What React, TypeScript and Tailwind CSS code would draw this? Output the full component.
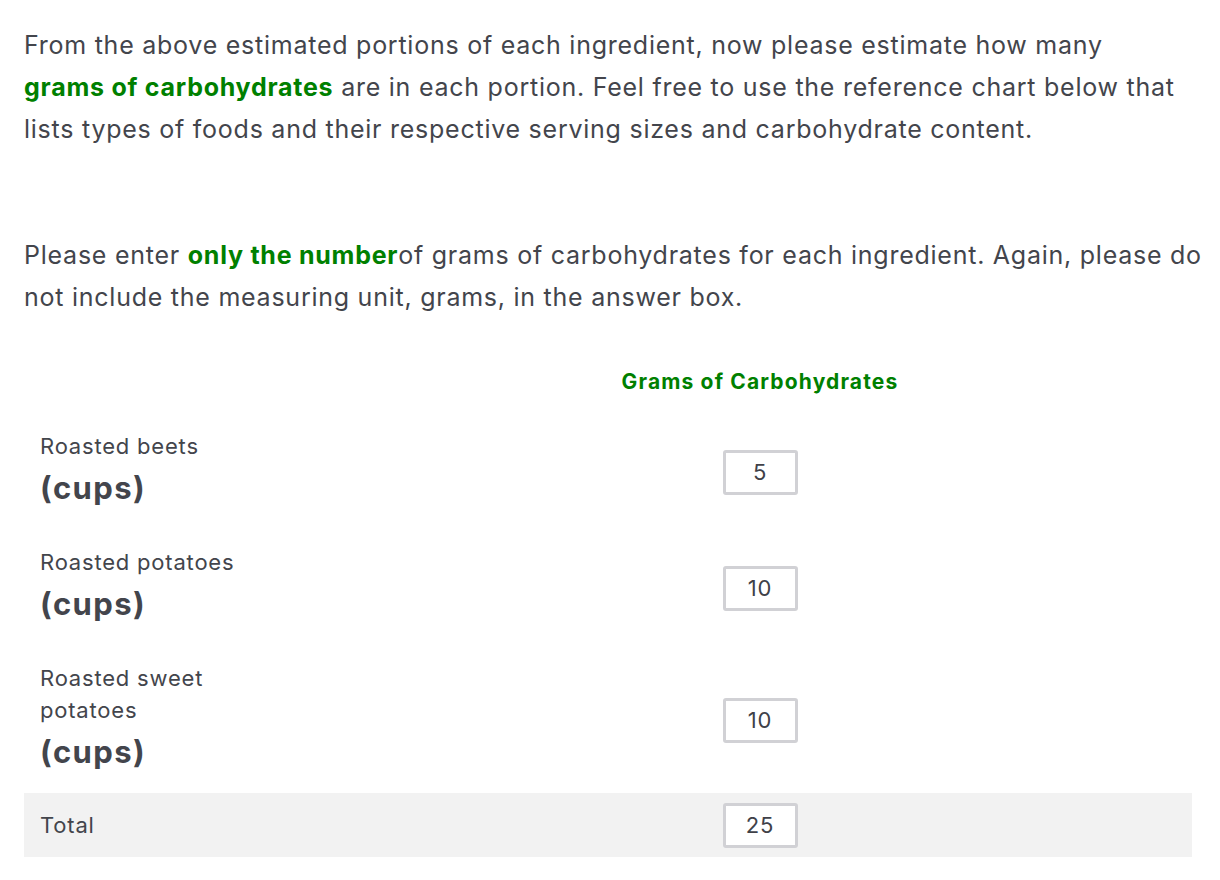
import { useState } from 'react';

const rows = [
  { name: 'Roasted beets', value: '5' },
  { name: 'Roasted potatoes', value: '10' },
  { name: 'Roasted sweet potatoes', value: '10' },
];

const NumBox = ({ value }: { value: string }) => (
  <div className="w-[75px] h-[45px] border-[3px] border-[#d1d1d5] rounded-[3px] bg-white flex items-center justify-center text-[22px] text-[#404148]">
    {value}
  </div>
);

export default function App() {
  const [items] = useState(rows);

  return (
    <div className="min-h-screen bg-white text-[#43454c] font-['Inter',sans-serif] tracking-[0.05em]">
      <div className="pl-[24px] pr-[16px] pt-[24px]">
        <p className="text-[25px] leading-[42px] tracking-[0.03em] pr-[24px]">
          From the above estimated portions of each ingredient, now please estimate how many{' '}
          <strong className="font-bold text-[#008000]">grams of carbohydrates</strong> are in each
          portion. Feel free to use the reference chart below that lists types of foods and their
          respective serving sizes and carbohydrate content.
        </p>

        <p className="text-[25px] leading-[42px] tracking-[0.03em] mt-[84px]">
          Please enter <strong className="font-bold text-[#008000]">only the number</strong>of grams
          of carbohydrates for each ingredient. Again, please do not include the measuring unit,
          grams, in the answer box.
        </p>

        <div className="mt-[50px] w-[1168px]">
          <div className="flex">
            <div className="w-[304px]" />
            <div className="flex-1 text-center text-[21px] font-bold text-[#008000] leading-[28px] tracking-[0.055em]">
              Grams of Carbohydrates
            </div>
          </div>

          <div className="mt-[18px]">
            {items.map((r) => (
              <div key={r.name} className="flex items-center py-[16px]">
                <div className="w-[304px] pl-[16px]">
                  <div className="max-w-[220px] text-[22px] leading-[32px]">{r.name}</div>
                  <div className="text-[31px] font-bold leading-[52px] tracking-[0.045em]">(cups)</div>
                </div>
                <div className="flex-1 flex justify-center">
                  <NumBox value={r.value} />
                </div>
              </div>
            ))}
          </div>

          <div className="flex items-center bg-[#f2f2f2] h-[64px] -mt-[1px]">
            <div className="w-[304px] pl-[16px] text-[22px]">Total</div>
            <div className="flex-1 flex justify-center">
              <NumBox value="25" />
            </div>
          </div>
        </div>
      </div>
    </div>
  );
}
